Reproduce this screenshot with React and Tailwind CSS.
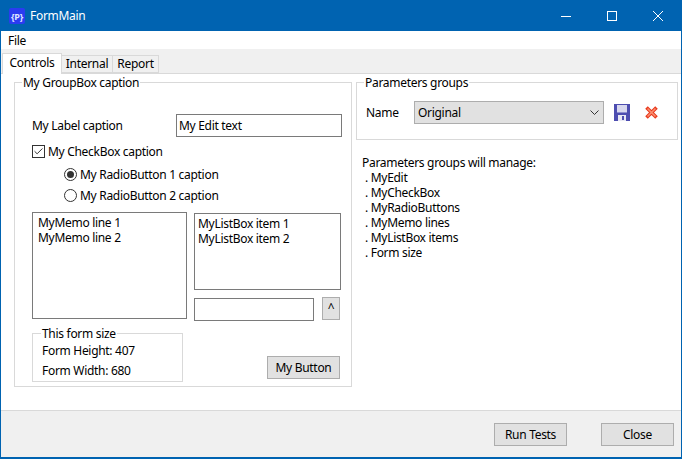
import { Check } from 'lucide-react'

function Btn({ children, className = '' }) {
  return (
    <button className={`flex h-[23px] w-[73px] items-center justify-center border border-[#adadad] bg-[#e1e1e1] ${className}`}>
      {children}
    </button>
  )
}

function Radio({ checked, children }) {
  return (
    <div className="flex h-[21px] items-center gap-[3px]">
      <span className="flex size-[13px] items-center justify-center rounded-full border border-[#333]">
        {checked && <span className="size-[7px] rounded-full bg-[#333]" />}
      </span>
      {children}
    </div>
  )
}

function FloppyIcon() {
  return (
    <svg width="16" height="17" viewBox="0 0 16 17" shapeRendering="crispEdges">
      <rect x="0" y="0" width="16" height="17" fill="#4d4db0" />
      <rect x="3" y="1" width="10" height="7" fill="#d8d8ee" />
      <rect x="3" y="8" width="10" height="1" fill="#8f8fcf" />
      <rect x="4" y="11" width="8" height="6" fill="#e8e8f4" />
      <rect x="8" y="12" width="2" height="4" fill="#4d4db0" />
    </svg>
  )
}

function RedCross() {
  return (
    <svg width="13" height="13" viewBox="0 0 13 13">
      <path d="M1.5 1.5 L11.5 11.5 M11.5 1.5 L1.5 11.5" stroke="#e8391c" strokeWidth="3.6" />
      <path d="M2.5 2.5 L10.5 10.5 M10.5 2.5 L2.5 10.5" stroke="#fb8f70" strokeWidth="1.6" />
    </svg>
  )
}

function WinButton({ children }) {
  return (
    <div className="flex h-[31px] w-[46px] items-center justify-center">
      <svg width="10" height="10" viewBox="0 0 10 10" fill="none" stroke="white">{children}</svg>
    </div>
  )
}

export default function App() {
  return (
    <div className="flex h-[459px] w-[682px] flex-col overflow-hidden border-x border-b-2 border-[#0063b1] bg-[#f0f0f0] font-['Noto_Sans',sans-serif] text-[12px] leading-[15px] tracking-[-0.3px] text-black">
      <header className="-mx-px flex h-[31px] shrink-0 items-center bg-[#0063b1] text-white">
        <svg className="ml-[9px]" width="16" height="16" viewBox="0 0 16 16">
          <rect width="16" height="16" rx="2" fill="#2a3cf0" />
          <text x="8" y="11.5" fontSize="9" fontWeight="700" textAnchor="middle" fill="#dfe6ff">{'{P}'}</text>
        </svg>
        <span className="ml-[5px]">FormMain</span>
        <div className="ml-auto flex items-center pr-px">
          <WinButton><path d="M0 5.5 H10" /></WinButton>
          <WinButton><rect x="0.5" y="0.5" width="9" height="9" /></WinButton>
          <WinButton><path d="M0 0 L10 10 M10 0 L0 10" /></WinButton>
        </div>
      </header>

      <nav className="flex h-[18px] shrink-0 items-center bg-white pl-[7px]">File</nav>

      <div className="flex h-[24px] shrink-0 items-end pl-[1px]">
        <div className="relative z-10 -mb-px flex h-[21px] w-[60px] items-center justify-center border border-b-0 border-[#d9d9d9] bg-white pb-[4px]">Controls</div>
        <div className="flex h-[18px] w-[51px] items-center justify-center border-y border-r border-[#d9d9d9] pb-[2px]">Internal</div>
        <div className="flex h-[18px] w-[46px] items-center justify-center border-y border-r border-[#d9d9d9] pb-[2px]">Report</div>
      </div>

      <main className="flex h-[338px] shrink-0 gap-[4px] border-y border-[#d9d9d9] bg-white pl-[13px] pr-[3px] pt-[1px]">
        <fieldset className="h-[312px] w-[338px] border border-[#d9d9d9] pl-[17px] pr-[8px]">
          <legend className="ml-[-10px] px-[1px]">My GroupBox caption</legend>
          <div className="mt-[24px] flex h-[23px] items-center">
            <span className="w-[144px] pb-[1px]">My Label caption</span>
            <div className="flex h-[23px] w-[166px] items-center border border-[#7a7a7a] px-[2px] pb-[1px]">My Edit text</div>
          </div>
          <div className="mt-[5px] flex h-[18px] items-center gap-[3px]">
            <span className="flex size-[13px] items-center justify-center border border-[#333]">
              <Check size={11} strokeWidth={2} color="#222" />
            </span>
            My CheckBox caption
          </div>
          <div className="ml-[32px] mt-[4px]">
            <Radio checked>My RadioButton 1 caption</Radio>
            <Radio>My RadioButton 2 caption</Radio>
          </div>
          <div className="mt-[6px] flex h-[109px] gap-[7px]">
            <div className="h-[107px] w-[155px] border border-[#7a7a7a] px-[5px] py-[2px]">
              <div>MyMemo line 1</div>
              <div>MyMemo line 2</div>
            </div>
            <div className="mt-[1px] w-[147px]">
              <div className="h-[77px] border border-[#7a7a7a] px-[3px] py-[2px]">
                <div>MyListBox item 1</div>
                <div>MyListBox item 2</div>
              </div>
              <div className="mt-[7px] flex items-start gap-[8px]">
                <div className="mt-[1px] h-[23px] w-[120px] border border-[#7a7a7a]" />
                <button className="flex h-[23px] w-[18px] items-center justify-center border border-[#adadad] bg-[#e1e1e1] pb-[3px]">^</button>
              </div>
            </div>
          </div>
          <div className="flex items-end justify-between pr-[3px]">
            <fieldset className="mt-[5px] h-[56px] w-[151px] border border-[#d9d9d9] pl-[9px]">
              <legend className="ml-[-1px] px-[1px]">This form size</legend>
              <div className="mt-[2px]">Form Height: 407</div>
              <div className="mt-[5px]">Form Width: 680</div>
            </fieldset>
            <Btn className="mb-[3px]">My Button</Btn>
          </div>
        </fieldset>

        <div className="flex-1">
          <fieldset className="h-[65px] border border-[#d9d9d9] pl-[9px]">
            <legend className="ml-[-2px] px-[1px]">Parameters groups</legend>
            <div className="mt-[11px] flex items-center">
              <span className="w-[48px]">Name</span>
              <div className="flex h-[23px] w-[190px] items-center justify-between border border-[#adadad] bg-[#e1e1e1] pl-[3px] pr-[4px]">
                Original
                <svg width="9" height="5" viewBox="0 0 9 5" fill="none" stroke="#333"><path d="M0.5 0.5 L4.5 4.5 L8.5 0.5" /></svg>
              </div>
              <span className="ml-[10px]"><FloppyIcon /></span>
              <span className="ml-[15px]"><RedCross /></span>
            </div>
          </fieldset>
          <div className="ml-[6px] mt-[15px]">
            <div>Parameters groups will manage:</div>
            <div className="pl-[3px]">. MyEdit</div>
            <div className="pl-[3px]">. MyCheckBox</div>
            <div className="pl-[3px]">. MyRadioButtons</div>
            <div className="pl-[3px]">. MyMemo lines</div>
            <div className="pl-[3px]">. MyListBox items</div>
            <div className="pl-[3px]">. Form size</div>
          </div>
        </div>
      </main>

      <footer className="flex flex-1 items-start justify-end gap-[34px] pr-[7px] pt-[12px]">
        <Btn>Run Tests</Btn>
        <Btn>Close</Btn>
      </footer>
    </div>
  )
}
